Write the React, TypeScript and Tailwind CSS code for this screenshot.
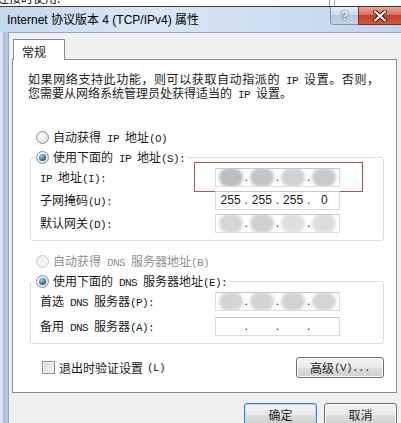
import React from "react";

// latin runs are set half-width, like the dialog's bitmap font
function T({ s }: { s: string }) {
  const parts = s.split(/([\x20-\x7e]+)/);
  return (
    <>
      {parts.map((p, i) =>
        i % 2 ? (
          <span
            key={i}
            className="whitespace-pre font-['Liberation_Mono',monospace] text-[11px] leading-[0px] tracking-[-0.6px]"
          >
            {p}
          </span>
        ) : (
          <React.Fragment key={i}>{p}</React.Fragment>
        ),
      )}
    </>
  );
}

function Radio({ checked, disabled }: { checked?: boolean; disabled?: boolean }) {
  return (
    <span
      className={`flex h-[13px] w-[13px] shrink-0 items-center justify-center rounded-full border ${
        disabled
          ? "border-[#cdcdcd] bg-[#f2f2f2]"
          : "border-[#8e8f8f] bg-[radial-gradient(circle_at_35%_35%,#ffffff,#d4d4d4)]"
      }`}
    >
      {checked && (
        <span className="h-[7px] w-[7px] rounded-full bg-[radial-gradient(circle_at_35%_30%,#9dd0f7,#2a6cab_60%,#17406e)]" />
      )}
    </span>
  );
}

function RadioLabel({
  text,
  checked,
  disabled,
}: {
  text: string;
  checked?: boolean;
  disabled?: boolean;
}) {
  return (
    <div className="flex h-[16px] items-center gap-[4px]">
      <Radio checked={checked} disabled={disabled} />
      <span className={disabled ? "text-[#8f8f8f]" : ""}>
        <T s={text} />
      </span>
    </div>
  );
}

type Field = { num?: string; blob?: string };

function IpBox({ fields }: { fields: Field[] }) {
  return (
    <div className="flex h-[19px] w-[125px] items-center overflow-hidden border border-[#dadde1] border-t-[#c4c7cc] bg-white px-px font-['Liberation_Sans',sans-serif] text-[12px] leading-[14px]">
      {fields.map((f, i) => (
        <React.Fragment key={i}>
          {i > 0 && <span className="relative z-10 w-[4px] text-center">.</span>}
          <span className="relative flex h-full flex-1 items-center justify-center">
            {f.blob && <span className={`h-[19px] w-[24px] rounded-[10px] blur-[1.5px] ${f.blob}`} />}
            {f.num}
          </span>
        </React.Fragment>
      ))}
    </div>
  );
}

function Row({ label, fields, children }: { label: string; fields: Field[]; children?: React.ReactNode }) {
  return (
    <div className="relative flex h-[20px] items-center pl-[9px]">
      <span className="w-[175px]">
        <T s={label} />
      </span>
      <IpBox fields={fields} />
      {children}
    </div>
  );
}

function Group({ legend, children, gap }: { legend: React.ReactNode; children: React.ReactNode; gap: string }) {
  return (
    <fieldset className={`ml-[2px] flex flex-col rounded-[3px] border border-[#d5dfe5] pb-[7px] pt-[2px] ${gap}`}>
      <legend className="ml-[4px] bg-white pl-px pr-[2px]">{legend}</legend>
      {children}
    </fieldset>
  );
}

function WinButton({ children, primary, className }: { children: React.ReactNode; primary?: boolean; className?: string }) {
  return (
    <button
      className={`flex h-[21px] items-center justify-center rounded-[3px] border bg-[linear-gradient(#f3f3f3,#ebebeb_50%,#dedede_50%,#cfcfcf)] text-[12px] leading-[14px] text-[#1e1e1e] ${
        primary
          ? "border-[#3c7fb1] shadow-[inset_0_0_0_1px_#aee0f9]"
          : "border-[#707070] shadow-[inset_0_0_0_1px_#fbfbfb]"
      } ${className ?? ""}`}
    >
      {children}
    </button>
  );
}

const ipFields: Field[] = [
  { blob: "bg-[#bdbdbd]" },
  { blob: "bg-[#c4c4c4]" },
  { blob: "bg-[#d2d2d2]" },
  { blob: "bg-[#c9c9c9]" },
];
const maskFields: Field[] = [{ num: "255" }, { num: "255" }, { num: "255" }, { num: "0" }];
const gwFields: Field[] = [
  { blob: "bg-[#d6d6d6]" },
  { blob: "bg-[#cfcfcf]" },
  { blob: "bg-[#dfdfdf]" },
  { blob: "bg-[#dcdcdc]" },
];
const dnsFields: Field[] = [
  { blob: "bg-[#d4d4d4]" },
  { blob: "bg-[#d4d4d4]" },
  { blob: "bg-[#d2d2d2]" },
  { blob: "bg-[#d6d6d6]" },
];
const emptyFields: Field[] = [{}, {}, {}, {}];

export default function App() {
  return (
    <div className="flex h-[423px] w-[401px] flex-col overflow-hidden bg-white">
      {/* window behind, mostly hidden */}
      <div className="flex h-[7px] shrink-0 overflow-hidden border-b border-[#3d3d3d]">
        <span className="-ml-[3px] -mt-[9px] font-['Noto_Sans_CJK_SC',sans-serif] text-[12px] leading-[14px] text-black">
          连接时使用:
        </span>
        <span className="ml-auto mr-[66px] flex gap-[4px]">
          <span className="h-full w-px bg-[#9a9a9a]" />
          <span className="h-full w-px bg-[#b5b5b5]" />
        </span>
      </div>

      <div className="flex flex-1 flex-col bg-[#cadbee]">
        <div className="flex h-[25px] shrink-0 items-start bg-[linear-gradient(90deg,#c4d8ee,#d9e7f5_35%,#cfe0f2_65%,#bfd4ec)]">
          <div className="flex-1 pl-[7px] pt-[5px] font-['Liberation_Sans','Noto_Sans_CJK_SC',sans-serif] text-[12px] leading-[16px] text-black">
            Internet 协议版本 4 (TCP/IPv4) 属性
          </div>
          <div className="flex h-[18px] w-[28px] items-center justify-center rounded-bl-[4px] border border-t-0 border-r-0 border-[#7f93ad] bg-[linear-gradient(#e3ecf6,#cbd9e9_50%,#b4c7de_50%,#c6d6ea)] font-['Liberation_Sans',sans-serif] text-[13px] font-bold text-white [text-shadow:0_0_2px_#2c3e5a,0_0_1px_#2c3e5a]">
            ?
          </div>
          <div className="flex h-[18px] w-[43px] items-center justify-center border-b border-l border-[#7a2a20] bg-[linear-gradient(#e9a99b,#d7705d_45%,#c1412b_50%,#d1583f)]">
            <svg width="14" height="12" viewBox="0 0 14 12">
              <path d="M2 1.5L12 10.5M12 1.5L2 10.5" stroke="#4a1209" strokeWidth="4" strokeLinecap="round" />
              <path d="M2 1.5L12 10.5M12 1.5L2 10.5" stroke="#ffffff" strokeWidth="2.2" strokeLinecap="round" />
            </svg>
          </div>
        </div>

        <div className="flex flex-1">
          <div className="w-[8px] bg-[linear-gradient(90deg,#dae5f1,#dae5f1_35%,#a9c1de_45%,#b7cbe4)]" />
          <div className="flex-1 border-l border-t border-[#93a7c0] bg-[#f0f0f0] pl-[3px] pt-[6px] font-['Noto_Sans_CJK_SC',sans-serif] text-[12px] leading-[14px] text-[#1a1a1a]">
            <div className="flex w-[385px] flex-col">
              <div className="relative z-10 -mb-px ml-px flex h-[21px] w-[52px] items-center border border-b-0 border-[#898c95] bg-white pl-[8px] pt-[3px]">
                常规
              </div>
              <div className="flex h-[334px] flex-col border border-[#898c95] bg-white pl-[15px] pr-[12px] pt-[12px]">
                <div className="flex flex-col leading-[14px]">
                  <span className="tracking-[0.6px]">
                    <T s="如果网络支持此功能，则可以获取自动指派的 IP 设置。否则，" />
                  </span>
                  <span>
                    <T s="您需要从网络系统管理员处获得适当的 IP 设置。" />
                  </span>
                </div>

                <div className="mt-[29px] pl-[8px]">
                  <RadioLabel text="自动获得 IP 地址(O)" />
                </div>
                <div className="mt-[4px]">
                  <Group gap="gap-[3px]" legend={<RadioLabel text="使用下面的 IP 地址(S):" checked />}>
                    <Row label="IP 地址(I):" fields={ipFields}>
                      <span className="absolute left-[163px] top-[-5px] h-[30px] w-[169px] border-[1.5px] border-[#c24b4b]" />
                    </Row>
                    <Row label="子网掩码(U):" fields={maskFields} />
                    <Row label="默认网关(D):" fields={gwFields} />
                  </Group>
                </div>

                <div className="mt-[12px] pl-[8px]">
                  <RadioLabel text="自动获得 DNS 服务器地址(B)" disabled />
                </div>
                <div className="mt-[4px]">
                  <Group gap="gap-[5px]" legend={<RadioLabel text="使用下面的 DNS 服务器地址(E):" checked />}>
                    <Row label="首选 DNS 服务器(P):" fields={dnsFields} />
                    <Row label="备用 DNS 服务器(A):" fields={emptyFields} />
                  </Group>
                </div>

                <div className="mt-[13px] flex items-center justify-between">
                  <div className="ml-[14px] flex items-center gap-[4px]">
                    <span className="h-[13px] w-[13px] border border-[#8e8f8f] bg-[linear-gradient(135deg,#d9d9d9,#f7f7f7)] shadow-[inset_0_0_0_1px_#f4f4f4]" />
                    <T s="退出时验证设置(L)" />
                  </div>
                  <WinButton className="w-[88px]">
                    <T s="高级(V)..." />
                  </WinButton>
                </div>
              </div>

              <div className="mt-[10px] flex justify-end gap-[7px]">
                <WinButton primary className="h-[23px] w-[73px]">
                  确定
                </WinButton>
                <WinButton className="h-[23px] w-[73px]">取消</WinButton>
              </div>
            </div>
          </div>
        </div>
      </div>
    </div>
  );
}
